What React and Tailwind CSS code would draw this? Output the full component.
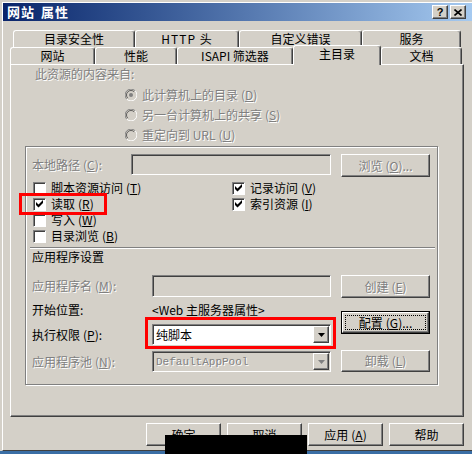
import React from "react";

const FONT = "font-['Noto_Sans_CJK_SC',sans-serif]";
const RAISED =
  "border border-t-white border-l-white border-r-[#404040] border-b-[#404040] shadow-[inset_-1px_-1px_0_#808080]";
const SUNKEN =
  "border border-t-[#808080] border-l-[#808080] border-r-white border-b-white shadow-[inset_1px_1px_0_#404040]";
const GRAY = "text-[#808080] [text-shadow:1px_1px_0_#fff]";

const Acc = ({ k }) => (
  <span className="ml-[3px]">
    (<span className="underline underline-offset-1">{k}</span>)
  </span>
);

const Tab = ({ label, className = "" }) => (
  <div
    className={`h-full flex items-center justify-center border-t border-l border-r border-t-white border-l-white border-r-[#404040] shadow-[inset_-1px_0_0_#808080] rounded-t-[3px] ${className}`}
  >
    {label}
  </div>
);

const Btn = ({ children, className = "", disabled }) => (
  <div className={`${RAISED} flex items-center justify-center ${disabled ? GRAY : ""} ${className}`}>
    {children}
  </div>
);

const Radio = ({ selected }) => (
  <svg width="12" height="12" viewBox="0 0 12 12" className="shrink-0">
    <circle cx="6" cy="6" r="5" fill="#d4d0c8" />
    <path d="M10.2 1.8 A5.9 5.9 0 0 0 1.8 10.2" stroke="#808080" fill="none" />
    <path d="M1.8 10.2 A5.9 5.9 0 0 0 10.2 1.8" stroke="#fff" fill="none" />
    <path d="M9.2 2.8 A4.5 4.5 0 0 0 2.8 9.2" stroke="#404040" fill="none" strokeWidth="0.8" />
    {selected && <circle cx="6" cy="6" r="2" fill="#808080" />}
  </svg>
);

const Check = ({ checked }) => (
  <span className={`${SUNKEN} w-[13px] h-[13px] bg-white flex items-center justify-center shrink-0`}>
    {checked && (
      <svg width="7" height="8" viewBox="0 0 7 8">
        <polygon points="0,2 2.5,4.5 7,0 7,3 2.5,7.5 0,5" fill="#000" />
      </svg>
    )}
  </span>
);

const CheckRow = ({ checked, children }) => (
  <div className="h-[16px] flex items-center gap-[5px]">
    <Check checked={checked} />
    <span>{children}</span>
  </div>
);

const Combo = ({ children, disabled }) => (
  <div
    className={`${SUNKEN} w-[179px] h-[21px] flex p-[1px] ${disabled ? "bg-[#d4d0c8]" : "bg-white"}`}
  >
    <div className="flex-1 flex items-center pl-[2px] overflow-hidden">{children}</div>
    <div className={`${RAISED} w-[16px] bg-[#d4d0c8] flex items-center justify-center`}>
      <svg width="7" height="4" viewBox="0 0 7 4">
        <path d="M0 0h7L3.5 4z" fill={disabled ? "#808080" : "#000"} />
      </svg>
    </div>
  </div>
);

export default function App() {
  return (
    <div className={`relative w-[472px] h-[454px] overflow-hidden bg-[#d4d0c8] text-[12px] leading-[14px] text-black ${FONT}`}>
      <div className="ml-[2px] mt-[2px] w-[470px] h-[449px] border-l border-t border-b border-l-white border-t-white border-b-[#404040] flex flex-col">
        {/* title bar */}
        <div className="h-[18px] flex items-center pl-[4px] pr-[6px] bg-gradient-to-r from-[#0a246a] to-[#a6caf0]">
          <span className="text-white font-bold text-[13px] tracking-[1px]">网站</span>
          <span className="ml-[6px] text-white font-bold text-[13px] tracking-[1px]">属性</span>
          <div className="ml-auto flex gap-[2px]">
            <Btn className="w-[16px] h-[14px] bg-[#d4d0c8]">
              <span className="font-bold text-[11px] leading-none font-['Liberation_Sans',sans-serif]">?</span>
            </Btn>
            <Btn className="w-[16px] h-[14px] bg-[#d4d0c8]">
              <svg width="8" height="7" viewBox="0 0 8 7">
                <path d="M0.5 0.5L7.5 6.5M7.5 0.5L0.5 6.5" stroke="#000" strokeWidth="1.6" />
              </svg>
            </Btn>
          </div>
        </div>

        <div className="pl-[7px] flex flex-col">
          {/* tabs */}
          <div className="mt-[9px] ml-[3px] flex h-[17px]">
            <Tab label="目录安全性" className="w-[122px]" />
            <Tab label="HTTP 头" className="w-[104px] tracking-[1px]" />
            <Tab label="自定义错误" className="w-[123px]" />
            <Tab label="服务" className="w-[99px]" />
          </div>
          <div className="flex h-[17px] items-start">
            <Tab label="网站" className="w-[85px]" />
            <Tab label="性能" className="w-[82px]" />
            <Tab label="ISAPI 筛选器" className="w-[116px]" />
            <Tab label="主目录" className="relative z-10 w-[88px] !h-[20px] -mt-[2px] bg-[#d4d0c8] pb-[3px]" />
            <Tab label="文档" className="w-[81px]" />
          </div>

          {/* panel */}
          <div className="w-[454px] h-[353px] border border-t-white border-l-white border-r-[#404040] border-b-[#404040] shadow-[inset_-1px_-1px_0_#808080] flex flex-col">
            <div className={`mt-[1px] h-[16px] pl-[24px] flex items-center ${GRAY}`}>此资源的内容来自:</div>
            <div className={`mt-[3px] pl-[114px] flex flex-col ${GRAY}`}>
              <div className="h-[20px] flex items-center gap-[5px]">
                <Radio selected />
                <span>此计算机上的目录<Acc k="D" /></span>
              </div>
              <div className="h-[20px] flex items-center gap-[5px]">
                <Radio />
                <span>另一台计算机上的共享<Acc k="S" /></span>
              </div>
              <div className="h-[20px] flex items-center gap-[5px]">
                <Radio />
                <span>重定向到 URL<Acc k="U" /></span>
              </div>
            </div>

            {/* group box */}
            <div className="ml-[14px] mt-[1px] w-[413px] h-[239px] border border-[#808080] shadow-[1px_1px_0_#fff,inset_1px_1px_0_#fff] flex flex-col">
              <div className="mt-[7px] pl-[6px] flex items-start">
                <div className={`w-[99px] h-[21px] flex items-center ${GRAY}`}>
                  本地路径<Acc k="C" />:
                </div>
                <div className={`${SUNKEN} w-[200px] h-[21px] bg-[#d4d0c8]`} />
                <Btn disabled className="ml-[10px] w-[89px] h-[23px]">
                  浏览<Acc k="O" />...
                </Btn>
              </div>

              <div className="mt-[3px] pl-[7px] grid grid-cols-[199px_1fr]">
                <div className="flex flex-col">
                  <CheckRow>脚本资源访问<Acc k="T" /></CheckRow>
                  <CheckRow checked>读取<Acc k="R" /></CheckRow>
                  <CheckRow>写入<Acc k="W" /></CheckRow>
                  <CheckRow>目录浏览<Acc k="B" /></CheckRow>
                </div>
                <div className="flex flex-col">
                  <CheckRow checked>记录访问<Acc k="V" /></CheckRow>
                  <CheckRow checked>索引资源<Acc k="I" /></CheckRow>
                </div>
              </div>

              <div className="mt-[3px] ml-[4px] w-[405px] h-[2px] border-t border-b border-t-[#808080] border-b-white" />
              <div className="h-[16px] pl-[6px] flex items-center">应用程序设置</div>

              <div className="pl-[6px] flex">
                <div className="w-[299px] flex flex-col">
                  <div className="mt-[10px] h-[22px] flex items-center">
                    <span className={`w-[120px] ${GRAY}`}>应用程序名<Acc k="M" />:</span>
                    <div className={`${SUNKEN} w-[179px] h-[22px] bg-[#d4d0c8]`} />
                  </div>
                  <div className="mt-[3px] h-[20px] flex items-center">
                    <span className="w-[120px]">开始位置:</span>
                    <span>&lt;Web 主服务器属性&gt;</span>
                  </div>
                  <div className="mt-[4px] h-[21px] flex items-center">
                    <span className="w-[120px]">执行权限<Acc k="P" />:</span>
                    <Combo>纯脚本</Combo>
                  </div>
                  <div className="mt-[6px] h-[21px] flex items-center">
                    <span className={`w-[120px] ${GRAY}`}>应用程序池<Acc k="N" />:</span>
                    <Combo disabled>
                      <span className={`font-['Liberation_Mono',monospace] text-[11px] ${GRAY}`}>DefaultAppPool</span>
                    </Combo>
                  </div>
                </div>
                <div className="ml-[10px] w-[89px] flex flex-col">
                  <Btn disabled className="mt-[10px] h-[23px]">
                    创建<Acc k="E" />
                  </Btn>
                  <div className="mt-[13px] h-[23px] border border-black flex">
                    <div className={`${RAISED} flex-1 flex p-[2px]`}>
                      <div className="flex-1 border border-dotted border-black flex items-center justify-center">
                        配置<Acc k="G" />...
                      </div>
                    </div>
                  </div>
                  <Btn disabled className="mt-[16px] h-[22px]">
                    卸载<Acc k="L" />
                  </Btn>
                </div>
              </div>
            </div>
          </div>

          {/* dialog buttons */}
          <div className="mt-[6px] w-[454px] flex justify-end gap-[6px]">
            <Btn className="w-[75px] h-[23px]">确定</Btn>
            <Btn className="w-[75px] h-[23px]">取消</Btn>
            <Btn className="w-[75px] h-[23px]">应用<Acc k="A" /></Btn>
            <Btn className="w-[75px] h-[23px]">帮助</Btn>
          </div>
        </div>
      </div>
      <div className="h-[3px] bg-[#3a6ea5]" />

      {/* annotations */}
      <div className="absolute left-[19px] top-[193px] w-[88px] h-[22px] border-[3px] border-[#ff0000]" />
      <div className="absolute left-[145px] top-[317px] w-[191px] h-[32px] border-[3px] border-[#ff0000]" />
      <div className="absolute left-[165px] top-[435px] w-[142px] h-[19px] bg-black" />
    </div>
  );
}
